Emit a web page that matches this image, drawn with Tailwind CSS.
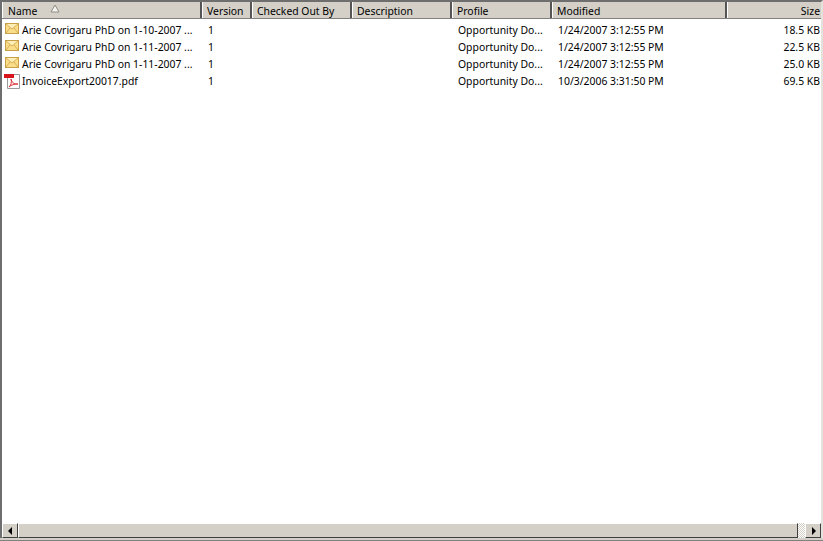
<!DOCTYPE html>
<html lang="en">
<head>
    <meta charset="UTF-8">
    <title>Documents</title>
    <script src="https://cdn.jsdelivr.net/npm/@tailwindcss/browser@4"></script>
</head>
<body class="bg-white">
    <main class="w-[823px] h-[541px] flex flex-col overflow-hidden bg-white text-[10.4px] leading-[16px] text-black font-['Noto_Sans',sans-serif]">
        <div class="flex-1 min-h-0 flex flex-col border-t-2 border-l-2 border-r-2 border-t-[#6e6e6e] border-l-[#6e6e6e] border-r-[#e4e2dc]">
            <!-- column headers -->
            <div class="flex h-[17px] bg-[#d4d0c8] border-b border-[#808080]">
                <div class="w-[200px] relative pl-[5px] pt-[1px] border-r-2 border-[#555] border-l border-l-white">Name
                    <svg class="absolute left-[47px] top-[2px]" width="10" height="9" viewBox="0 0 10 9"><path d="M5 1 L1 8 H9 Z" fill="#f4f3ef" stroke="#8f8d85"/></svg>
                </div>
                <div class="w-[50px] pl-[4px] pt-[1px] border-r-2 border-[#555] border-l border-l-white">Version</div>
                <div class="w-[100px] pl-[4px] pt-[1px] border-r-2 border-[#555] border-l border-l-white">Checked Out By</div>
                <div class="w-[100px] pl-[4px] pt-[1px] border-r-2 border-[#555] border-l border-l-white">Description</div>
                <div class="w-[100px] pl-[4px] pt-[1px] border-r-2 border-[#555] border-l border-l-white">Profile</div>
                <div class="w-[175px] pl-[4px] pt-[1px] border-r-2 border-[#555] border-l border-l-white">Modified</div>
                <div class="flex-1 pr-[1px] pt-[1px] text-right border-l border-l-white">Size</div>
            </div>
            <!-- rows -->
            <div class="flex-1 pt-[2px]">
                <div class="flex h-[17px] items-center">
                    <div class="w-[200px] flex items-center pl-[3px] gap-[3px]">
                        <svg class="shrink-0 -mt-[2px]" width="14" height="11" viewBox="0 0 14 11"><rect x=".5" y=".5" width="13" height="10" fill="#f9dd88" stroke="#c9a04a"/><path d="M1 1 L7 6 L13 1 Z" fill="#fdeeb8"/><path d="M1 1 L7 6 L13 1 M1 10 L5 5 M13 10 L9 5" fill="none" stroke="#d9ae55"/></svg>
                        <span class="whitespace-nowrap">Arie Covrigaru PhD on 1-10-2007 ...</span>
                    </div>
                    <div class="w-[50px] pl-[6px]">1</div>
                    <div class="w-[100px]"></div>
                    <div class="w-[100px]"></div>
                    <div class="w-[100px] pl-[6px]">Opportunity Do...</div>
                    <div class="w-[175px] pl-[6px]">1/24/2007 3:12:55 PM</div>
                    <div class="flex-1 pr-[1px] text-right">18.5 KB</div>
                </div>
                <div class="flex h-[17px] items-center">
                    <div class="w-[200px] flex items-center pl-[3px] gap-[3px]">
                        <svg class="shrink-0 -mt-[2px]" width="14" height="11" viewBox="0 0 14 11"><rect x=".5" y=".5" width="13" height="10" fill="#f9dd88" stroke="#c9a04a"/><path d="M1 1 L7 6 L13 1 Z" fill="#fdeeb8"/><path d="M1 1 L7 6 L13 1 M1 10 L5 5 M13 10 L9 5" fill="none" stroke="#d9ae55"/></svg>
                        <span class="whitespace-nowrap">Arie Covrigaru PhD on 1-11-2007 ...</span>
                    </div>
                    <div class="w-[50px] pl-[6px]">1</div>
                    <div class="w-[100px]"></div>
                    <div class="w-[100px]"></div>
                    <div class="w-[100px] pl-[6px]">Opportunity Do...</div>
                    <div class="w-[175px] pl-[6px]">1/24/2007 3:12:55 PM</div>
                    <div class="flex-1 pr-[1px] text-right">22.5 KB</div>
                </div>
                <div class="flex h-[17px] items-center">
                    <div class="w-[200px] flex items-center pl-[3px] gap-[3px]">
                        <svg class="shrink-0 -mt-[2px]" width="14" height="11" viewBox="0 0 14 11"><rect x=".5" y=".5" width="13" height="10" fill="#f9dd88" stroke="#c9a04a"/><path d="M1 1 L7 6 L13 1 Z" fill="#fdeeb8"/><path d="M1 1 L7 6 L13 1 M1 10 L5 5 M13 10 L9 5" fill="none" stroke="#d9ae55"/></svg>
                        <span class="whitespace-nowrap">Arie Covrigaru PhD on 1-11-2007 ...</span>
                    </div>
                    <div class="w-[50px] pl-[6px]">1</div>
                    <div class="w-[100px]"></div>
                    <div class="w-[100px]"></div>
                    <div class="w-[100px] pl-[6px]">Opportunity Do...</div>
                    <div class="w-[175px] pl-[6px]">1/24/2007 3:12:55 PM</div>
                    <div class="flex-1 pr-[1px] text-right">25.0 KB</div>
                </div>
                <div class="flex h-[17px] items-center">
                    <div class="w-[200px] flex items-center pl-[2px] gap-[2px]">
                        <svg class="shrink-0" width="16" height="16" viewBox="0 0 16 16"><path d="M3.5 1.5 H15.5 V15.5 H3.5 Z" fill="#fff" stroke="#9a9a9a"/><rect x="0" y="1" width="10" height="4" fill="#d8141c"/><path d="M7 6 C8 10 10 11 14 11 C10 11 7 12 5 14 C7 12 8 9 7 6 Z" fill="#fbe3e3" stroke="#d8343c"/></svg>
                        <span class="whitespace-nowrap">InvoiceExport20017.pdf</span>
                    </div>
                    <div class="w-[50px] pl-[6px]">1</div>
                    <div class="w-[100px]"></div>
                    <div class="w-[100px]"></div>
                    <div class="w-[100px] pl-[6px]">Opportunity Do...</div>
                    <div class="w-[175px] pl-[6px]">10/3/2006 3:31:50 PM</div>
                    <div class="flex-1 pr-[1px] text-right">69.5 KB</div>
                </div>
            </div>
            <!-- horizontal scrollbar -->
            <div class="flex h-[15px] bg-[repeating-conic-gradient(#d4d0c8_0_25%,#fff_0_50%)] bg-[length:2px_2px]">
                <div class="w-[16px] flex items-center justify-center bg-[#d4d0c8] border border-t-white border-l-white border-r-[#404040] border-b-[#404040]">
                    <svg width="5" height="8" viewBox="0 0 5 8"><path d="M4 0 V8 L0 4 Z" fill="#000"/></svg>
                </div>
                <div class="w-[780px] bg-[#d4d0c8] border border-t-white border-l-white border-r-[#404040] border-b-[#404040]"></div>
                <div class="flex-1"></div>
                <div class="w-[16px] flex items-center justify-center bg-[#d4d0c8] border border-t-white border-l-white border-r-[#404040] border-b-[#404040]">
                    <svg width="5" height="8" viewBox="0 0 5 8"><path d="M1 0 V8 L5 4 Z" fill="#000"/></svg>
                </div>
            </div>
        </div>
        <div class="h-[3px] bg-[#d4d0c8] border-b border-[#808080]"></div>
    </main>
</body>
</html>
